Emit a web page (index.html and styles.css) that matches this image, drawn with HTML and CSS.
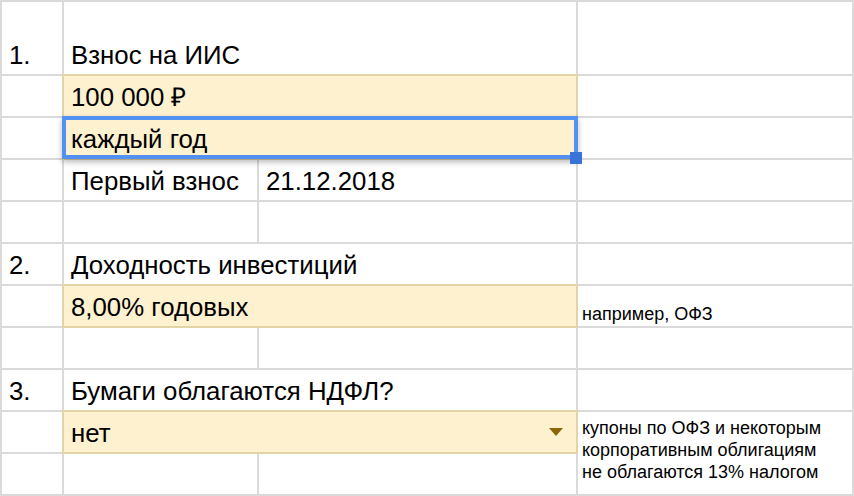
FILE: index.html
```html
<!DOCTYPE html>
<html lang="ru">
<head>
<meta charset="utf-8">
<title>ИИС</title>
<link rel="stylesheet" href="styles.css">
</head>
<body>
<div class="sheet">
  <!-- row 1 -->
  <div class="cell">1.</div>
  <div class="cell span2">Взнос на ИИС</div>
  <div class="cell"></div>
  <!-- row 2 -->
  <div class="cell"></div>
  <div class="cell span2 input">100 000 ₽</div>
  <div class="cell"></div>
  <!-- row 3 -->
  <div class="cell"></div>
  <div class="cell span2 input selected">каждый год</div>
  <div class="cell"></div>
  <!-- row 4 -->
  <div class="cell"></div>
  <div class="cell">Первый взнос</div>
  <div class="cell">21.12.2018</div>
  <div class="cell"></div>
  <!-- row 5 -->
  <div class="cell"></div>
  <div class="cell"></div>
  <div class="cell"></div>
  <div class="cell"></div>
  <!-- row 6 -->
  <div class="cell">2.</div>
  <div class="cell span2">Доходность инвестиций</div>
  <div class="cell"></div>
  <!-- row 7 -->
  <div class="cell"></div>
  <div class="cell span2 input">8,00% годовых</div>
  <div class="cell note">например, ОФЗ</div>
  <!-- row 8 -->
  <div class="cell"></div>
  <div class="cell"></div>
  <div class="cell"></div>
  <div class="cell"></div>
  <!-- row 9 -->
  <div class="cell">3.</div>
  <div class="cell span2">Бумаги облагаются НДФЛ?</div>
  <div class="cell"></div>
  <!-- row 10 -->
  <div class="cell"></div>
  <div class="cell span2 input dropdown"><span class="value">нет</span><span class="caret"></span></div>
  <div class="cell note wrap">купоны по ОФЗ и некоторым корпоративным облигациям не облагаются 13% налогом</div>
  <!-- row 11 -->
  <div class="cell"></div>
  <div class="cell"></div>
  <div class="cell"></div>
</div>
</body>
</html>
```

FILE: styles.css
```css
html, body {
  margin: 0;
  padding: 0;
  background: #ffffff;
  overflow: hidden;
}

.sheet {
  display: grid;
  grid-template-columns: 60px 193px 317px 274px;
  grid-template-rows: 72px repeat(10, 40px);
  gap: 2px;
  padding: 2px;
  width: 854px;
  height: 496px;
  box-sizing: border-box;
  background: #dadada;
  font-family: "Liberation Sans", Arial, sans-serif;
  font-size: 25.8px;
  line-height: 30px;
  color: #000000;
}

.cell {
  background: #ffffff;
  display: flex;
  align-items: flex-end;
  padding: 0 6px 4px 7px;
  white-space: nowrap;
  min-width: 0;
}

.span2 {
  grid-column: span 2;
}

.input {
  background: #fef1cf;
  box-shadow: 0 0 0 2px #e3d4a7;
}

.selected {
  position: relative;
  z-index: 2;
}

.selected::after {
  content: "";
  position: absolute;
  left: -2px;
  top: -2px;
  right: -2px;
  bottom: -1px;
  border: 4px solid #5291f2;
  box-shadow: 0 3px 6px rgba(0, 0, 0, 0.28);
  pointer-events: none;
}

.selected::before {
  content: "";
  position: absolute;
  right: -6px;
  bottom: -6px;
  width: 12px;
  height: 12px;
  background: #3a74da;
  z-index: 1;
}

.note {
  font-size: 18px;
  line-height: 22px;
  padding: 0 8px 1px 4px;
}

.wrap {
  grid-row: span 2;
  white-space: normal;
  align-items: flex-start;
  padding-top: 5px;
  padding-right: 18px;
}

.dropdown .value {
  flex: 1;
}

.caret {
  align-self: center;
  width: 0;
  height: 0;
  border-left: 7px solid transparent;
  border-right: 7px solid transparent;
  border-top: 8px solid #8a6700;
  margin: 0 7px 0 0;
  position: relative;
  top: 2px;
}
```
